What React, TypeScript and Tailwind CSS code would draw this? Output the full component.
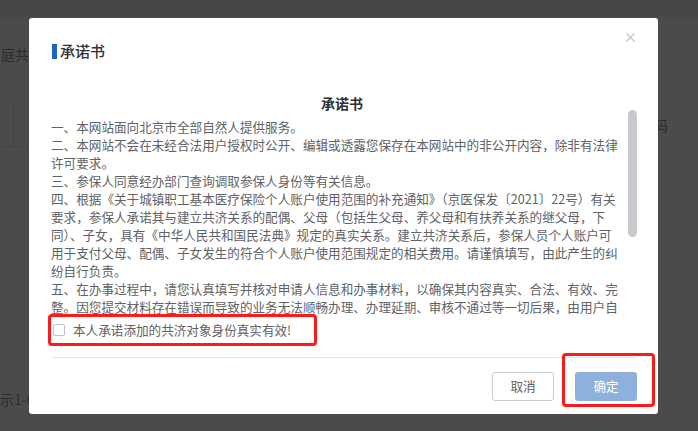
import React from "react";

const lines = [
	"一、本网站面向北京市全部自然人提供服务。",
	"二、本网站不会在未经合法用户授权时公开、编辑或透露您保存在本网站中的非公开内容，除非有法律",
	"许可要求。",
	"三、参保人同意经办部门查询调取参保人身份等有关信息。",
	"四、根据《关于城镇职工基本医疗保险个人账户使用范围的补充通知》（京医保发〔2021〕22号）有关",
	"要求，参保人承诺其与建立共济关系的配偶、父母（包括生父母、养父母和有扶养关系的继父母，下",
	"同）、子女，具有《中华人民共和国民法典》规定的真实关系。建立共济关系后，参保人员个人账户可",
	"用于支付父母、配偶、子女发生的符合个人账户使用范围规定的相关费用。请谨慎填写，由此产生的纠",
	"纷自行负责。",
	"五、在办事过程中，请您认真填写并核对申请人信息和办事材料，以确保其内容真实、合法、有效、完",
	"整。因您提交材料存在错误而导致的业务无法顺畅办理、办理延期、审核不通过等一切后果，由用户自",
];

function Backdrop() {
	return (
		<>
			<div className="absolute left-0 top-0 h-[17px] w-full bg-[#464646]" />
			<div className="absolute left-px top-[44px] text-[14px] text-[#2b2b2b] whitespace-nowrap">
				庭共济
			</div>
			<div className="absolute left-[13px] top-[103px] h-[43px] w-px bg-[#424242]" />
			<div className="absolute left-0 top-[146px] h-px w-[29px] bg-[#444444]" />
			<div className="absolute left-[640px] top-[115px] text-[14px] text-[#2b2b2b] whitespace-nowrap">
				号码
			</div>
			<div className="absolute left-0 top-[389px] text-[14px] text-[#2b2b2b] whitespace-nowrap">
				示1-0条
			</div>
		</>
	);
}

export default function App() {
	return (
		<div
			className="relative h-[431px] w-[698px] overflow-hidden bg-[#4b4b4b] pl-[29px] pt-[18px]"
			style={{ fontFamily: '"Noto Sans CJK SC", "Liberation Sans", sans-serif' }}
		>
			<Backdrop />

			<div className="relative flex h-[396px] w-[629px] flex-col rounded-[3px] bg-white">
				{/* header */}
				<div className="flex items-center pl-[23px] pt-[24px]">
					<span className="h-[15px] w-[5px] bg-[#1c66c2]" />
					<span className="ml-[3px] text-[15px] font-medium leading-[18px] text-[#303133]">承诺书</span>
				</div>
				<button type="button" className="absolute right-[23px] top-[15px] h-[9px] w-[9px]">
					<svg viewBox="0 0 9 9" className="h-[9px] w-[9px]">
						<path d="M0.5 0.5 L8.5 8.5 M8.5 0.5 L0.5 8.5" stroke="#c0c4cc" strokeWidth="1.2" />
					</svg>
				</button>

				{/* scroll area */}
				<div className="ml-[22px] mt-[28px] flex h-[227px] w-[586px]">
					<div className="h-full w-[577px] overflow-hidden pt-[6px]">
						<div className="mb-[6px] pl-[5px] text-center text-[14px] font-semibold leading-[18px] text-[#303133]">
							承诺书
						</div>
						{lines.map((l) => (
							<div key={l} className="whitespace-nowrap text-[12.6px] leading-[18px] text-[#606266]">
								{l}
							</div>
						))}
					</div>
					<div className="ml-auto h-full w-[9px] pt-[22px]">
						<div className="h-[127px] w-[9px] rounded-full bg-[#c9c9cd]" />
					</div>
				</div>

				{/* promise checkbox */}
				<div className="ml-[19px] mt-[-1px] flex h-[32px] w-[269px] items-center rounded-[4px] border-[3px] border-[#ff1a1a] pl-[2px]">
					<span className="h-[12px] w-[12px] rounded-[2px] border border-[#c0c4cc] bg-white" />
					<span className="ml-[8px] text-[12.6px] leading-[18px] text-[#606266]">
						本人承诺添加的共济对象身份真实有效!
					</span>
				</div>

				<div className="ml-[23px] mt-[11px] h-px w-[585px] bg-[#e4e4e4]" />

				{/* footer */}
				<div className="mt-[14px] flex justify-end gap-[21px] pr-[21px]">
					<button
						type="button"
						className="h-[29px] w-[62px] rounded-[3px] border border-[#c9cdd4] bg-white text-[12.6px] text-[#606266]"
					>
						取消
					</button>
					<div className="relative">
						<button
							type="button"
							disabled
							className="h-[29px] w-[62px] rounded-[3px] bg-[#8db1dc] text-[12.6px] text-white"
						>
							确定
						</button>
						<div className="pointer-events-none absolute bottom-[-6px] left-[-13px] right-[-18px] top-[-19px] rounded-[4px] border-[3px] border-[#ff1a1a]" />
					</div>
				</div>
			</div>
		</div>
	);
}
